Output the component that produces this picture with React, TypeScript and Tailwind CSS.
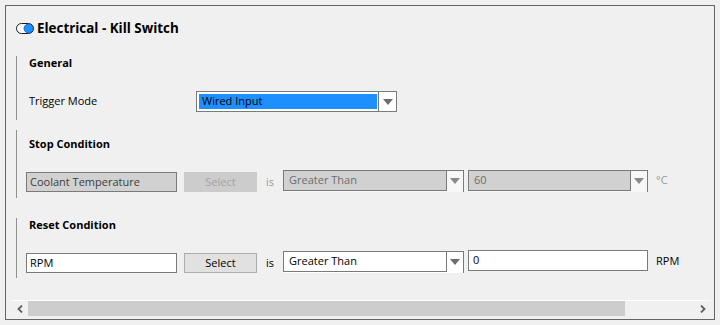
const font = "font-['Open_Sans','Noto_Sans',sans-serif]";

function Arrow({ muted }: { muted?: boolean }) {
  return (
    <svg width="10" height="6" viewBox="0 0 10 6">
      <path d="M0 0 H10 L5 6 Z" fill={muted ? "#8a8a8a" : "#6d6d6d"} />
    </svg>
  );
}

function Toggle() {
  return (
    <svg width="18" height="11" viewBox="0 0 18 11">
      <rect x="0.5" y="0.5" width="17" height="10" rx="5" fill="#fff" stroke="#1a1a1a" />
      <circle cx="12.5" cy="5.5" r="4.5" fill="#1e8fff" stroke="#0b5cb8" strokeWidth="0.8" />
    </svg>
  );
}

function Combo({ value, width, disabled }: { value: string; width: number; disabled?: boolean }) {
  return (
    <div
      className={`flex h-[22px] border-t border-r border-[#7a7a7a] ${disabled ? "bg-[#f7f7f7]" : "bg-white"}`}
      style={{ width }}
    >
      <div
        className={`flex h-[20px] flex-1 items-center border-b border-l border-r border-[#7a7a7a] pl-[5px] ${
          disabled ? "bg-[#d1d1d1] text-[#6d6d6d]" : "bg-white text-black"
        }`}
      >
        {value}
      </div>
      <div className="flex h-[20px] w-[16px] items-center justify-center">
        <Arrow muted={disabled} />
      </div>
    </div>
  );
}

function TextBox({ value, disabled }: { value: string; disabled?: boolean }) {
  return (
    <div
      className={`flex h-[20px] w-[151px] items-center border border-[#7a7a7a] pl-[3px] ${
        disabled ? "bg-[#d1d1d1] text-[#3c3c3c]" : "bg-white text-black"
      }`}
    >
      {value}
    </div>
  );
}

function SelectButton({ disabled }: { disabled?: boolean }) {
  return (
    <div
      className={`ml-[7px] flex h-[20px] w-[73px] items-center justify-center ${
        disabled ? "bg-[#cccccc] text-[#a3a3a3]" : "border border-[#adadad] bg-[#e1e1e1] text-black"
      }`}
    >
      Select
    </div>
  );
}

function ConditionRow({
  source,
  op,
  value,
  unit,
  disabled,
}: {
  source: string;
  op: string;
  value: string;
  unit: string;
  disabled?: boolean;
}) {
  return (
    <div className="flex items-end">
      <TextBox value={source} disabled={disabled} />
      <SelectButton disabled={disabled} />
      <div className={`flex h-[20px] w-[26px] items-center pl-[9px] ${disabled ? "text-[#9a9a9a]" : "text-black"}`}>is</div>
      <Combo value={op} width={181} disabled={disabled} />
      <div className="ml-[4px]">
        {disabled ? (
          <Combo value={value} width={180} disabled />
        ) : (
          <div className="mb-[2px] flex h-[21px] w-[180px] items-center border border-[#7a7a7a] bg-white pl-[4px]">
            {value}
          </div>
        )}
      </div>
      <div
        className={`mb-[2px] flex h-[20px] items-center pl-[8px] ${disabled ? "text-[#9a9a9a]" : "text-black"}`}
      >
        {unit}
      </div>
    </div>
  );
}

function Section({
  title,
  top,
  height,
  headPad,
  children,
}: {
  title: string;
  top: number;
  height: number;
  headPad: number;
  children: React.ReactNode;
}) {
  return (
    <div className="ml-[10px] border-l border-[#8f8f8f] pl-[9px]" style={{ marginTop: top, height }}>
      <div className="pl-[3px] font-bold leading-[14px]" style={{ paddingTop: headPad }}>
        {title}
      </div>
      {children}
    </div>
  );
}

export default function App() {
  return (
    <div className={`h-[325px] w-[720px] bg-[#f0f0f0] p-[5px] text-[11px] text-black ${font}`}>
      <div className="flex h-[315px] w-[710px] flex-col border border-[#646464]">
        <div className="ml-[10px] mt-[15px] flex h-[14px] items-center gap-[3px]">
          <Toggle />
          <span className="text-[13.4px] font-bold">Electrical - Kill Switch</span>
        </div>

        <Section title="General" top={21} height={64} headPad={0}>
          <div className="mt-[21px] flex items-center">
            <div className="w-[170px] pl-[3px]">Trigger Mode</div>
            <div className="flex h-[21px] w-[201px] border border-[#7a7a7a] bg-white">
              <div className="m-[2px] mr-0 flex flex-1 items-center bg-[#1e8fff] pl-[3px]">Wired Input</div>
              <div className="ml-[1px] flex w-[18px] items-center justify-center border-l border-[#7a7a7a]">
                <Arrow />
              </div>
            </div>
          </div>
        </Section>

        <Section title="Stop Condition" top={10} height={68} headPad={7}>
          <div className="mt-[19px]">
            <ConditionRow source="Coolant Temperature" op="Greater Than" value="60" unit="°C" disabled />
          </div>
        </Section>

        <Section title="Reset Condition" top={20} height={60} headPad={0}>
          <div className="mt-[18px]">
            <ConditionRow source="RPM" op="Greater Than" value="0" unit="RPM" />
          </div>
        </Section>

        <div className="mt-auto mb-[3px] ml-[5px] mr-[3px] border-t border-white">
          <div className="flex h-[15px] items-center">
            <div className="flex w-[17px] items-center justify-center">
              <svg width="6" height="8" viewBox="0 0 6 8">
                <path d="M5 0.5 L1.5 4 L5 7.5" fill="none" stroke="#606060" strokeWidth="1.8" />
              </svg>
            </div>
            <div className="h-[15px] w-[597px] bg-[#cdcdcd]" />
            <div className="flex flex-1 items-center justify-end pr-[5px]">
              <svg width="6" height="8" viewBox="0 0 6 8">
                <path d="M1 0.5 L4.5 4 L1 7.5" fill="none" stroke="#606060" strokeWidth="1.8" />
              </svg>
            </div>
          </div>
        </div>
      </div>
    </div>
  );
}
